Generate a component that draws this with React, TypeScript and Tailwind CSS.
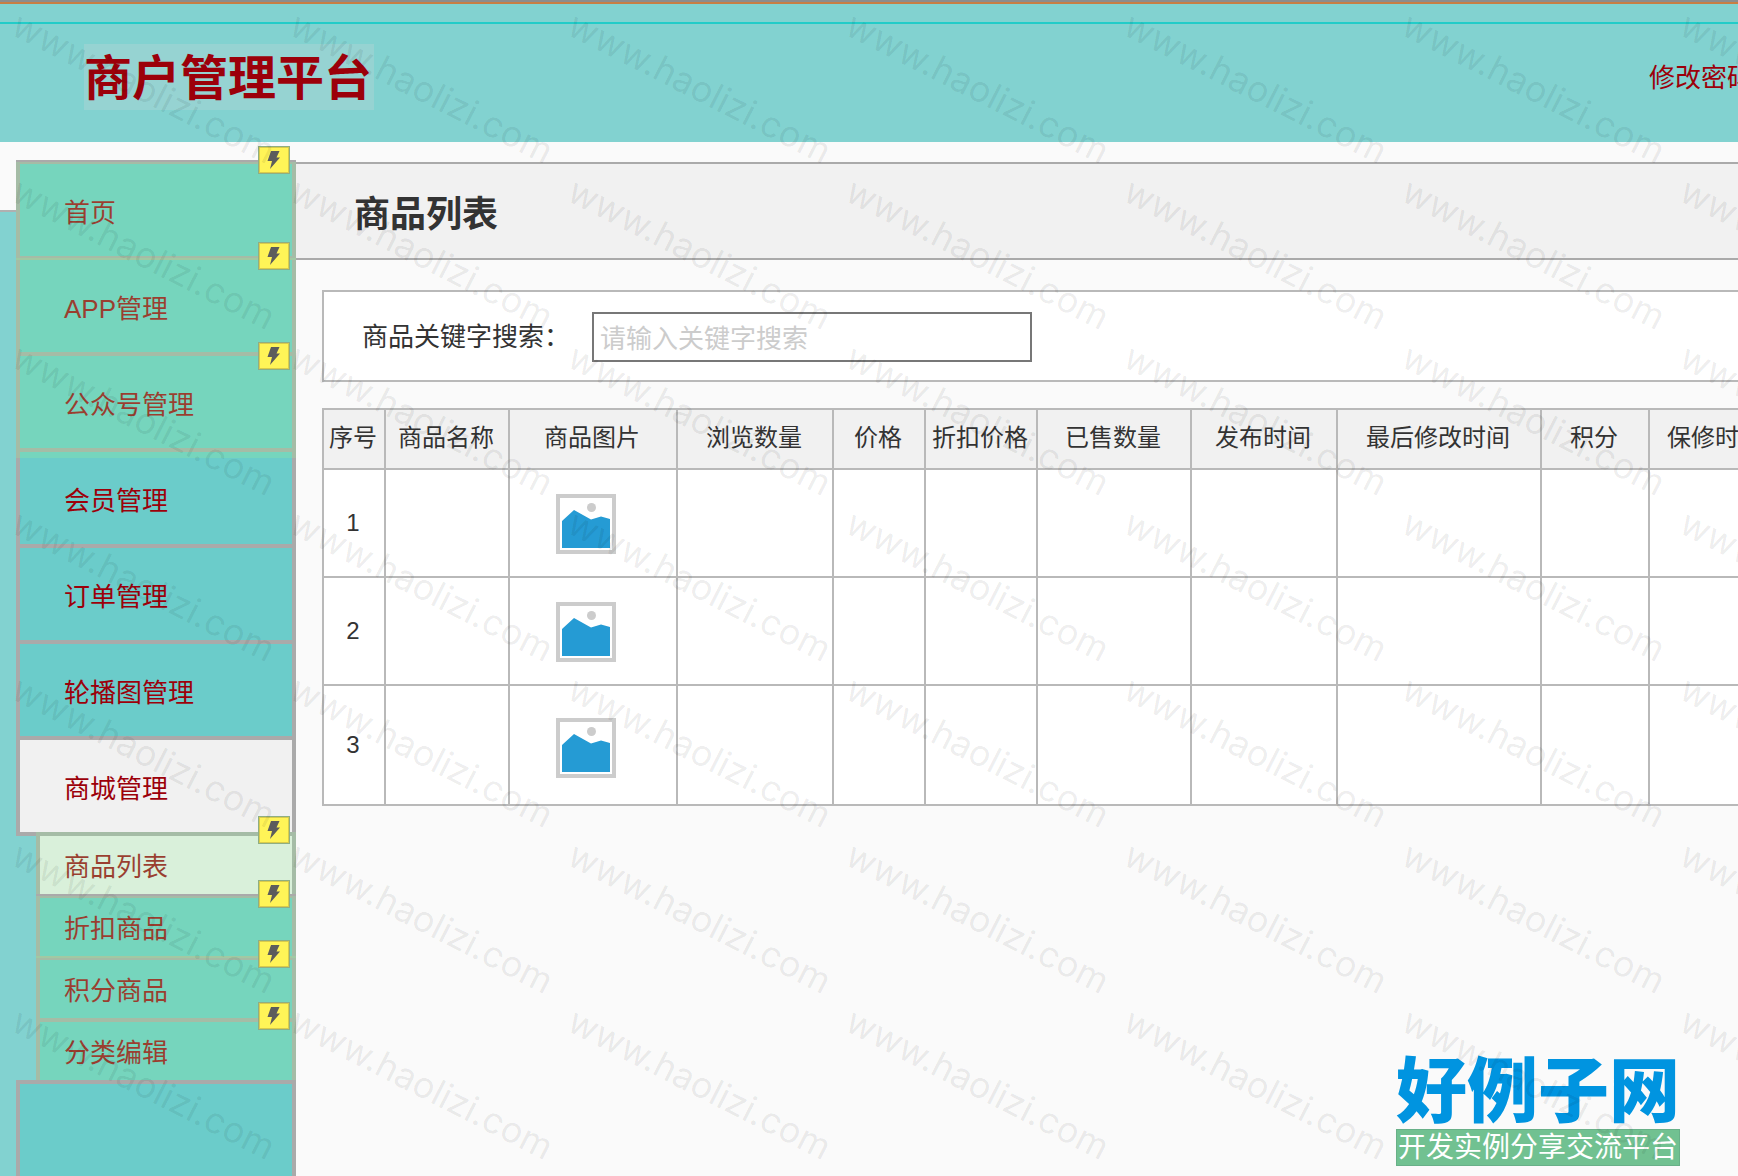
interface NavItem {
  label: string;
  active?: boolean;
  hotspot?: string;
}

interface Column {
  label: string;
  width: string;
}

const MENU: NavItem[] = [
  { label: "首页", hotspot: "top-0.5 h-[98px]" },
  { label: "APP管理", hotspot: "top-0.5 h-[100px]" },
  { label: "公众号管理", hotspot: "top-1.5 h-[100px]" },
  { label: "会员管理" },
  { label: "订单管理" },
  { label: "轮播图管理" },
  { label: "商城管理", active: true },
];

const SUBMENU: NavItem[] = [
  { label: "商品列表", active: true, hotspot: "top-0 h-[62px]" },
  { label: "折扣商品", hotspot: "top-0.5 h-[62px]" },
  { label: "积分商品", hotspot: "top-0 h-[62px]" },
  { label: "分类编辑", hotspot: "top-0 h-[62px]" },
];

const COLUMNS: Column[] = [
  { label: "序号", width: "w-[62px]" },
  { label: "商品名称", width: "w-[124px]" },
  { label: "商品图片", width: "w-[168px]" },
  { label: "浏览数量", width: "w-[156px]" },
  { label: "价格", width: "w-[92px]" },
  { label: "折扣价格", width: "w-[112px]" },
  { label: "已售数量", width: "w-[154px]" },
  { label: "发布时间", width: "w-[146px]" },
  { label: "最后修改时间", width: "w-[204px]" },
  { label: "积分", width: "w-[108px]" },
  { label: "保修时间", width: "w-[134px]" },
];

const ROWS = [
  { id: 1, height: "h-[108px]", picture: "pt-0.5" },
  { id: 2, height: "h-[108px]", picture: "pt-0.5" },
  { id: 3, height: "h-[120px]", picture: "pt-1.5" },
];

function Hotspot({ className }: { className: string }) {
  return (
    <div className={`pointer-events-none absolute inset-x-0 z-10 bg-[rgba(149,239,156,0.26)] ${className}`}>
      <span className="absolute -top-4 right-1.5 flex h-7 w-8 items-center justify-center border border-[#8fae83] bg-[#fff457] shadow-[inset_0_0_0_1px_#d9cb4b]">
        <svg width="14" height="18" viewBox="0 0 14 18" fill="#5c5c5c" aria-hidden="true">
          <path d="M4 0h8.500L9.500 6.500H13L3 18 5 10H0.500z" />
        </svg>
      </span>
    </div>
  );
}

function MenuLink({ item }: { item: NavItem }) {
  return (
    <li className="relative h-24 shrink-0">
      <a
        href="#"
        className={`flex h-[100px] items-center border-4 border-[#aaaaaa] pt-1.5 pl-11 text-[26px] leading-8 text-[#9c000a] ${
          item.active ? "bg-[#f1f1f1]" : "bg-[#6bccca]"
        }`}
      >
        {item.label}
      </a>
      {item.hotspot ? <Hotspot className={item.hotspot} /> : null}
    </li>
  );
}

function SubmenuLink({ item }: { item: NavItem }) {
  return (
    <li className="relative h-[62px]">
      <a
        href="#"
        className={`flex h-[66px] items-center border-4 border-[#aaaaaa] pt-1 pl-6 text-[26px] leading-8 text-[#9c000a] ${
          item.active ? "bg-[#f1f1f1]" : "bg-[#6bccca]"
        }`}
      >
        {item.label}
      </a>
      {item.hotspot ? <Hotspot className={item.hotspot} /> : null}
    </li>
  );
}

function Sidebar() {
  return (
    <aside className="flex w-[296px] shrink-0">
      <div className="mt-[68px] w-4 border-t-2 border-[#b0b0b0] bg-[#82d2d0]" />
      <nav className="flex flex-1 flex-col pt-[18px]">
        <ul>
          {MENU.map((item) => (
            <MenuLink key={item.label} item={item} />
          ))}
        </ul>
        <div className="shrink-0 bg-[#82d2d0] pl-5">
          <ul>
            {SUBMENU.map((item) => (
              <SubmenuLink key={item.label} item={item} />
            ))}
          </ul>
        </div>
        <div className="relative min-h-24 flex-1 border-4 border-b-0 border-[#aaaaaa] bg-[#6bccca]" />
      </nav>
    </aside>
  );
}

function PicturePlaceholder() {
  return (
    <svg width="60" height="60" viewBox="0 0 60 60" role="img" aria-label="商品图片">
      <rect x="2" y="2" width="56" height="56" fill="#fff" stroke="#ccc" strokeWidth="4" />
      <circle cx="35.5" cy="13.5" r="4.5" fill="#ccc" />
      <path d="M6 27L18 16L35 25.500L45 22.500L54 25V54H6z" fill="#259bd4" />
    </svg>
  );
}

function ProductTable() {
  return (
    <table className="w-[1462px] table-fixed border-collapse bg-white text-2xl text-[#333]">
      <thead>
        <tr className="h-[60px] bg-[#f1f1f1]">
          {COLUMNS.map((column) => (
            <th
              key={column.label}
              scope="col"
              className={`border-2 border-[#b9b9b9] p-0 pr-0.5 pb-0.5 text-center font-normal whitespace-nowrap ${column.width}`}
            >
              {column.label}
            </th>
          ))}
        </tr>
      </thead>
      <tbody>
        {ROWS.map((row) => (
          <tr key={row.id} className={row.height}>
            {COLUMNS.map((column, i) => (
              <td key={column.label} className="border-2 border-[#b9b9b9] p-0 pr-0.5 text-center">
                {i === 0 ? row.id : null}
                {i === 2 ? (
                  <div className={`flex justify-center pr-3 ${row.picture}`}>
                    <PicturePlaceholder />
                  </div>
                ) : null}
              </td>
            ))}
          </tr>
        ))}
      </tbody>
    </table>
  );
}

function Watermark() {
  return (
    <div className="pointer-events-none absolute inset-0 z-30 overflow-hidden" aria-hidden="true">
      {Array.from({ length: 8 }, (_, row) => (
        <div key={row} className="flex h-[166px]">
          {Array.from({ length: 8 }, (_, col) => (
            <div key={col} className="w-[278px] shrink-0 pt-1 pl-6">
              <span className="block origin-top-left rotate-[27deg] font-['Inter',sans-serif] text-4xl leading-10 whitespace-nowrap text-black/8">
                www.haolizi.com
              </span>
            </div>
          ))}
        </div>
      ))}
    </div>
  );
}

function SiteLogo() {
  return (
    <div className="absolute right-[58px] bottom-2.5 z-20 w-[284px] text-center whitespace-nowrap">
      <div className="h-[78px] text-[71px] leading-[82px] font-black text-[#0094e0]">好例子网</div>
      <div className="h-[37px] border border-[#68b088] bg-[#71c191] text-[28px] leading-[35px] text-white">
        开发实例分享交流平台
      </div>
    </div>
  );
}

export default function App() {
  return (
    <div className="relative flex min-h-screen flex-col overflow-hidden bg-[#fafafa] font-['Liberation_Sans','Noto_Sans_CJK_SC',sans-serif]">
      <header className="shrink-0 bg-[#82d2d0] text-[#9c000a]">
        <div className="h-0.5 bg-[#8c8c8c]" />
        <div className="h-0.5 bg-[#c87e44]" />
        <div className="mt-[18px] h-0.5 bg-[#22ccc8]" />
        <div className="flex h-[118px] items-start justify-between pt-5 pl-[84px]">
          <h1 className="h-[66px] w-[290px] bg-[#96d3d2] text-5xl leading-[70px] font-bold whitespace-nowrap">
            商户管理平台
          </h1>
          <a href="#" className="w-[89px] pt-[18px] text-[26px] leading-8 whitespace-nowrap">
            修改密码
          </a>
        </div>
      </header>

      <div className="flex flex-1">
        <Sidebar />
        <main className="min-w-0 flex-1 pt-5">
          <div className="flex h-[98px] items-center border-y-2 border-[#aaaaaa] bg-[#f1f1f1] pt-2 pl-[58px]">
            <h2 className="text-4xl font-bold text-[#333]">商品列表</h2>
          </div>
          <div className="pt-[30px] pl-[26px]">
            <form className="flex h-[92px] items-center border-2 border-r-0 border-[#b9b9b9] bg-white pt-0.5 pl-[38px]">
              <label htmlFor="keyword" className="w-[230px] text-[26px] leading-8 whitespace-nowrap text-[#333]">
                商品关键字搜索：
              </label>
              <input
                id="keyword"
                type="text"
                placeholder="请输入关键字搜索"
                className="h-[50px] w-[440px] border-2 border-[#777] bg-white px-1.5 pt-1 text-[26px] placeholder:text-[#ccc]"
              />
            </form>
            <div className="mt-[26px] overflow-hidden">
              <ProductTable />
            </div>
          </div>
        </main>
      </div>

      <SiteLogo />
      <Watermark />
    </div>
  );
}
